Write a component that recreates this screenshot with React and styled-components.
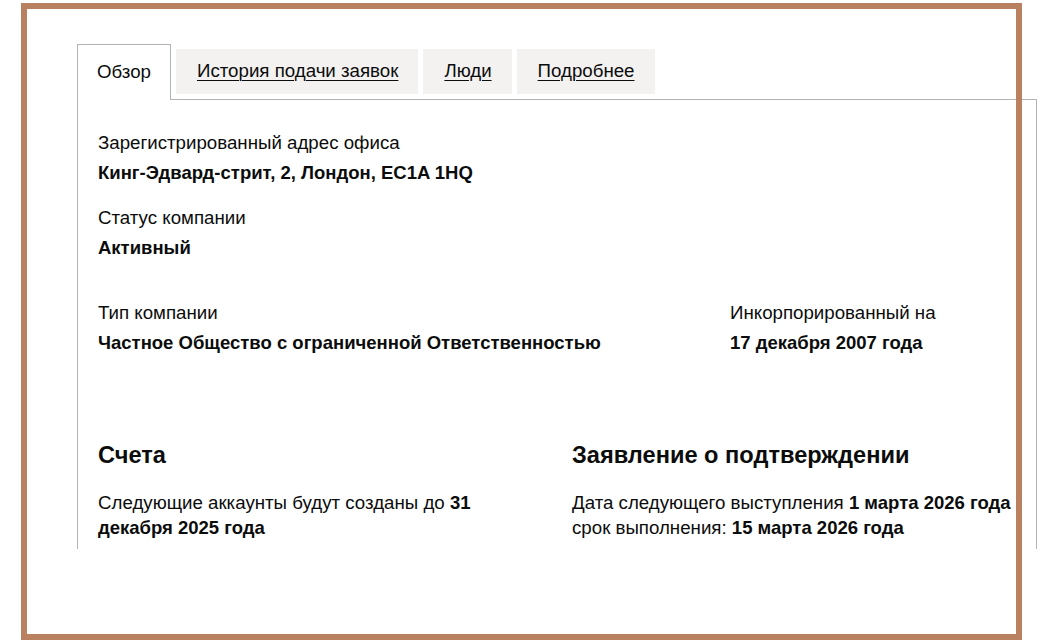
import React from 'react'
import styled, { createGlobalStyle } from 'styled-components'

const GlobalStyle = createGlobalStyle`
  html, body {
    margin: 0;
    padding: 0;
    background: #ffffff;
  }
  body {
    font-family: "Liberation Sans", Arial, sans-serif;
    color: #0b0c0c;
  }
`

const Page = styled.div`
  position: relative;
  width: 1044px;
  height: 642px;
  overflow: hidden;
  background: #fff;
`

// brown frame painted over the page content
const Frame = styled.div`
  position: absolute;
  left: 21px;
  top: 3px;
  width: 1001px;
  height: 637px;
  box-sizing: border-box;
  border: 6px solid #b98160;
  pointer-events: none;
`

const Content = styled.div`
  padding: 44px 0 0 77px;
  width: 960px;
`

const TabList = styled.ul`
  display: flex;
  align-items: flex-end;
  gap: 5px;
  list-style: none;
  margin: 0;
  padding: 0;
`

const Tab = styled.li`
  box-sizing: border-box;
  font-size: 18.7px;
  line-height: 25px;
  padding: ${p => (p.$active ? '14px 19px 15px 19px' : '9px 20px 10px 21px')};
  height: ${p => (p.$active ? '56px' : '45px')};
  margin-bottom: ${p => (p.$active ? '-1px' : '5px')};
  background: ${p => (p.$active ? '#ffffff' : '#f3f2f1')};
  border: ${p => (p.$active ? '1px solid #b1b4b6' : 'none')};
  border-bottom: none;
  position: relative;
  z-index: 1;

  a {
    color: #0b0c0c;
    text-decoration: ${p => (p.$active ? 'none' : 'underline')};
    text-underline-offset: 3px;
    text-decoration-thickness: 1px;
  }
`

const Panel = styled.section`
  box-sizing: border-box;
  height: 450px;
  border: 1px solid #b1b4b6;
  border-bottom: none;
  padding: 30px 20px 0 20px;
  overflow: hidden;
`

const Field = styled.div`
  margin-bottom: 20px;
`

const Label = styled.div`
  font-size: 18.7px;
  line-height: 25px;
  margin-bottom: 5px;
`

const Value = styled.div`
  font-size: 18.5px;
  line-height: 25px;
  font-weight: 700;
`

const Row = styled.div`
  display: grid;
  grid-template-columns: 632px 1fr;
  margin-top: 40px;
`

const Columns = styled.div`
  display: grid;
  grid-template-columns: 420px 1fr;
  column-gap: 54px;
  margin-top: 85px;
`

const Heading = styled.h2`
  margin: 0 0 20px;
  font-size: 23.6px;
  line-height: 30px;
  font-weight: 700;
`

const Text = styled.p`
  margin: 0;
  font-size: 18.7px;
  line-height: 25px;

  b {
    font-weight: 700;
    font-size: 18.5px;
  }
`

const tabs = ['Обзор', 'История подачи заявок', 'Люди', 'Подробнее']

export default function App() {
  return (
    <Page>
      <GlobalStyle />
      <Content>
        <TabList>
          {tabs.map((t, i) => (
            <Tab key={t} $active={i === 0}>
              <a href="#">{t}</a>
            </Tab>
          ))}
        </TabList>
        <Panel>
          <Field>
            <Label>Зарегистрированный адрес офиса</Label>
            <Value>Кинг-Эдвард-стрит, 2, Лондон, EC1A 1HQ</Value>
          </Field>
          <Field>
            <Label>Статус компании</Label>
            <Value>Активный</Value>
          </Field>
          <Row>
            <div>
              <Label>Тип компании</Label>
              <Value>Частное Общество с ограниченной Ответственностью</Value>
            </div>
            <div>
              <Label>Инкорпорированный на</Label>
              <Value>17 декабря 2007 года</Value>
            </div>
          </Row>
          <Columns>
            <div>
              <Heading>Счета</Heading>
              <Text>
                Следующие аккаунты будут созданы до <b>31 декабря 2025 года</b>
              </Text>
            </div>
            <div>
              <Heading>Заявление о подтверждении</Heading>
              <Text>
                Дата следующего выступления <b>1 марта 2026 года</b>
                <br />
                срок выполнения: <b>15 марта 2026 года</b>
              </Text>
            </div>
          </Columns>
        </Panel>
      </Content>
      <Frame />
    </Page>
  )
}
